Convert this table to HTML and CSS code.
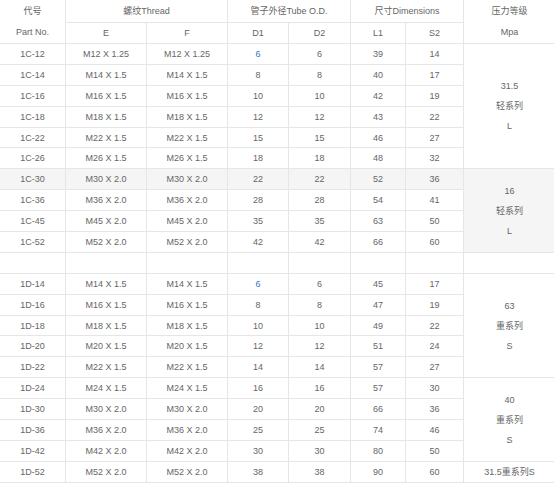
FILE: index.html
```html
<!DOCTYPE html>
<html lang="zh">
<head>
<meta charset="utf-8">
<title>规格表</title>
<link rel="stylesheet" href="styles.css">
</head>
<body>
<table class="spec">
  <colgroup>
    <col class="c0"><col class="c1"><col class="c2"><col class="c3"><col class="c4"><col class="c5"><col class="c6"><col class="c7">
  </colgroup>
  <tbody>
    <tr><td rowspan="2" class="two">代号<br>Part No.</td><td colspan="2">螺纹Thread</td><td colspan="2">管子外径Tube O.D.</td><td colspan="2">尺寸Dimensions</td><td rowspan="2" class="two">压力等级<br>Mpa</td></tr>
    <tr><td>E</td><td>F</td><td>D1</td><td>D2</td><td>L1</td><td>S2</td></tr>

    <tr><td>1C-12</td><td>M12 X 1.25</td><td>M12 X 1.25</td><td class="blue">6</td><td>6</td><td>39</td><td>14</td><td rowspan="6" class="multi">31.5<br>轻系列<br>L</td></tr>
    <tr><td>1C-14</td><td>M14 X 1.5</td><td>M14 X 1.5</td><td>8</td><td>8</td><td>40</td><td>17</td></tr>
    <tr><td>1C-16</td><td>M16 X 1.5</td><td>M16 X 1.5</td><td>10</td><td>10</td><td>42</td><td>19</td></tr>
    <tr><td>1C-18</td><td>M18 X 1.5</td><td>M18 X 1.5</td><td>12</td><td>12</td><td>43</td><td>22</td></tr>
    <tr><td>1C-22</td><td>M22 X 1.5</td><td>M22 X 1.5</td><td>15</td><td>15</td><td>46</td><td>27</td></tr>
    <tr><td>1C-26</td><td>M26 X 1.5</td><td>M26 X 1.5</td><td>18</td><td>18</td><td>48</td><td>32</td></tr>
    <tr class="hl"><td>1C-30</td><td>M30 X 2.0</td><td>M30 X 2.0</td><td>22</td><td>22</td><td>52</td><td>36</td><td rowspan="4" class="multi">16<br>轻系列<br>L</td></tr>
    <tr><td>1C-36</td><td>M36 X 2.0</td><td>M36 X 2.0</td><td>28</td><td>28</td><td>54</td><td>41</td></tr>
    <tr><td>1C-45</td><td>M45 X 2.0</td><td>M45 X 2.0</td><td>35</td><td>35</td><td>63</td><td>50</td></tr>
    <tr><td>1C-52</td><td>M52 X 2.0</td><td>M52 X 2.0</td><td>42</td><td>42</td><td>66</td><td>60</td></tr>

    <tr><td></td><td></td><td></td><td></td><td></td><td></td><td></td><td></td></tr>

    <tr><td>1D-14</td><td>M14 X 1.5</td><td>M14 X 1.5</td><td class="blue">6</td><td>6</td><td>45</td><td>17</td><td rowspan="5" class="multi">63<br>重系列<br>S</td></tr>
    <tr><td>1D-16</td><td>M16 X 1.5</td><td>M16 X 1.5</td><td>8</td><td>8</td><td>47</td><td>19</td></tr>
    <tr><td>1D-18</td><td>M18 X 1.5</td><td>M18 X 1.5</td><td>10</td><td>10</td><td>49</td><td>22</td></tr>
    <tr><td>1D-20</td><td>M20 X 1.5</td><td>M20 X 1.5</td><td>12</td><td>12</td><td>51</td><td>24</td></tr>
    <tr><td>1D-22</td><td>M22 X 1.5</td><td>M22 X 1.5</td><td>14</td><td>14</td><td>57</td><td>27</td></tr>
    <tr><td>1D-24</td><td>M24 X 1.5</td><td>M24 X 1.5</td><td>16</td><td>16</td><td>57</td><td>30</td><td rowspan="4" class="multi">40<br>重系列<br>S</td></tr>
    <tr><td>1D-30</td><td>M30 X 2.0</td><td>M30 X 2.0</td><td>20</td><td>20</td><td>66</td><td>36</td></tr>
    <tr><td>1D-36</td><td>M36 X 2.0</td><td>M36 X 2.0</td><td>25</td><td>25</td><td>74</td><td>46</td></tr>
    <tr><td>1D-42</td><td>M42 X 2.0</td><td>M42 X 2.0</td><td>30</td><td>30</td><td>80</td><td>50</td></tr>
    <tr><td>1D-52</td><td>M52 X 2.0</td><td>M52 X 2.0</td><td>38</td><td>38</td><td>90</td><td>60</td><td>31.5重系列S</td></tr>
  </tbody>
</table>
</body>
</html>
```

FILE: styles.css
```css
html, body {
  margin: 0;
  padding: 0;
  background: #ffffff;
}

.spec {
  border-collapse: collapse;
  table-layout: fixed;
  width: 556px;
  margin: 0 0 0 -1px;
  font-family: Arial, "Liberation Sans", "Noto Sans CJK SC", sans-serif;
  font-size: 9px;
  color: #666666;
}

.c0 { width: 66px; }
.c1 { width: 81px; }
.c2 { width: 81px; }
.c3 { width: 61px; }
.c4 { width: 62px; }
.c5 { width: 55px; }
.c6 { width: 58px; }
.c7 { width: 92px; }

.spec tr {
  height: 20.9px;
}

.spec td {
  border: 1px solid #e6e6e6;
  padding: 0;
  text-align: center;
  vertical-align: middle;
  line-height: 12px;
  white-space: nowrap;
}

.spec td.two {
  line-height: 21px;
}

.spec td.multi {
  line-height: 20px;
}

.spec tr:first-child td {
  border-top-color: transparent;
}

.spec tr.hl td,
.spec td.multi.gray {
  background: #f5f5f5;
}

.spec tr.hl td {
  background: #f5f5f5;
}

.spec .blue {
  color: #3d6fc4;
}
```
